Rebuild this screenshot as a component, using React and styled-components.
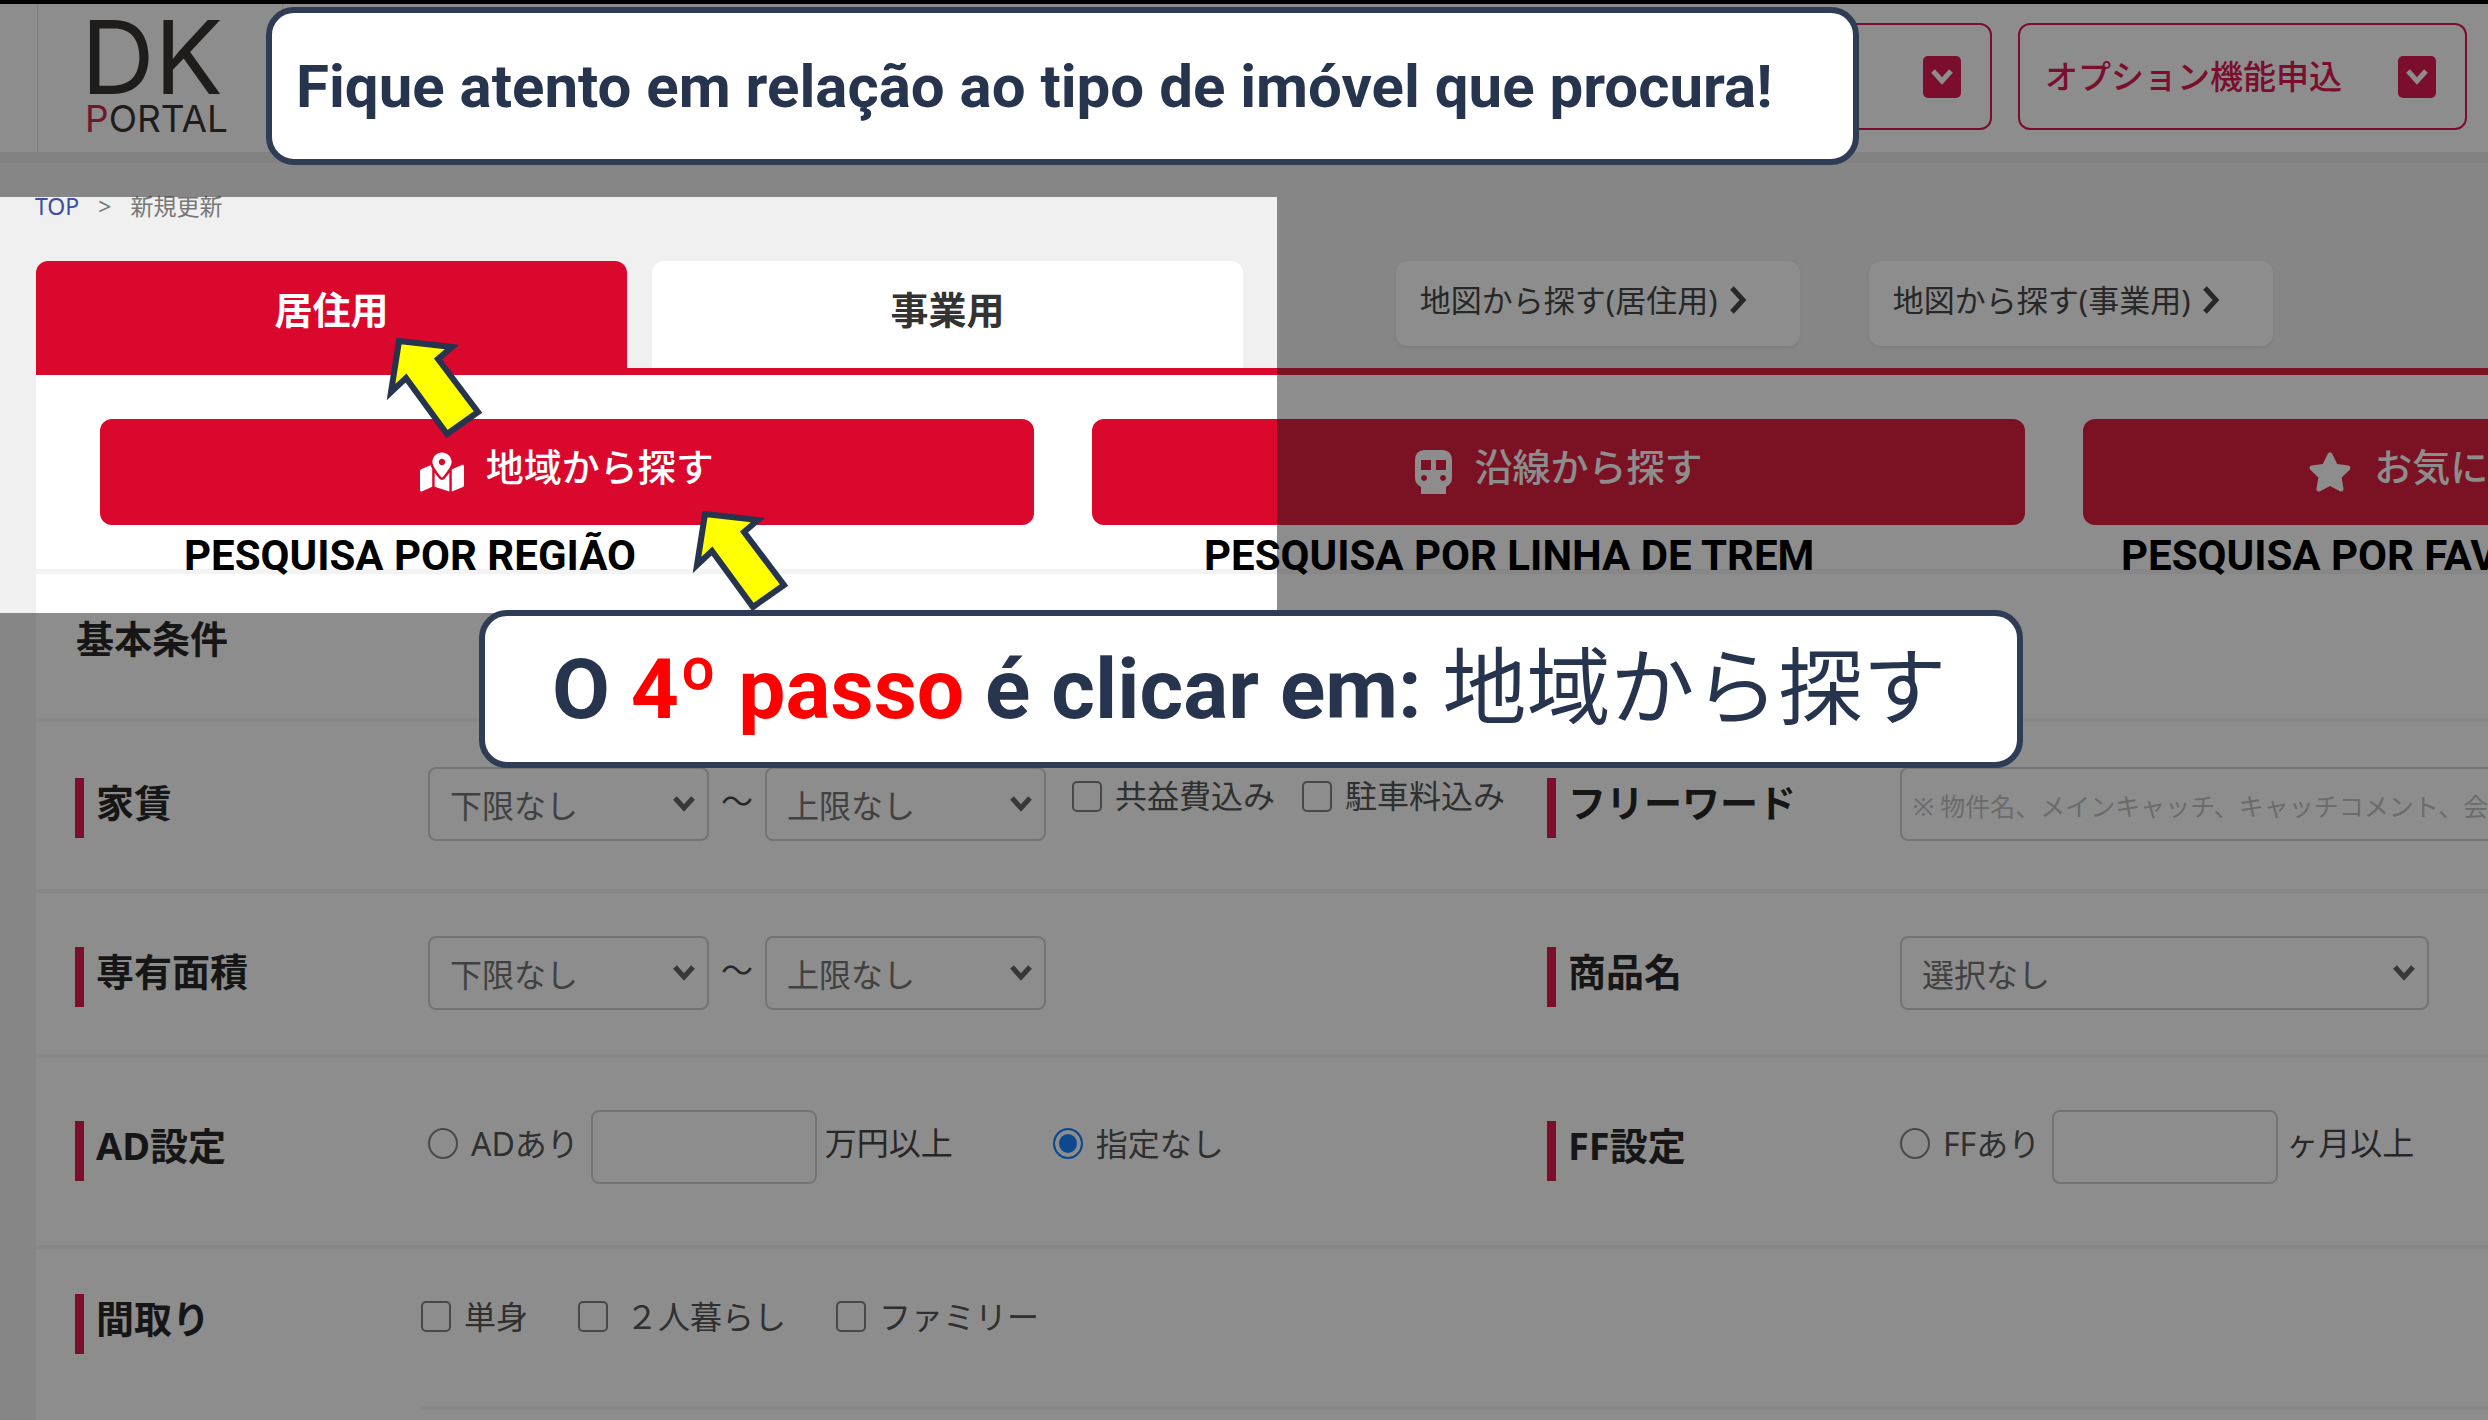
import styled, { createGlobalStyle } from 'styled-components'
import { FaMapMarkedAlt, FaStar } from 'react-icons/fa'

const GlobalStyle = createGlobalStyle`
    *, *::before, *::after {
        box-sizing: border-box;
    }
    body {
        margin: 0;
        background: #f0f0f0;
        color: #333;
        font-family: "Noto Sans", "Noto Sans CJK JP", sans-serif;
        font-size: 32px;
        line-height: 48px;
    }
    button, input, select {
        font: inherit;
        color: inherit;
        margin: 0;
    }
`
const Page = styled.div`
    position: relative;
    display: flex;
    flex-direction: column;
    min-height: 100vh;
    overflow: hidden;
    border-top: 4px solid #000;
`
const Header = styled.header`
    display: flex;
    justify-content: space-between;
    height: 159px;
    padding: 0 21px 0 37px;
    background: #fff;
    border-bottom: 11px solid #e8e8e8;
`
const Logo = styled.a`
    display: block;
    width: 246px;
    padding-left: 43px;
    border: solid #e0e0e0;
    border-width: 0 1px;
    svg {
        display: block;
    }
`
const HeaderNav = styled.nav`
    display: flex;
    gap: 26px;
    padding-top: 19px;
`
const NavButton = styled.button`
    display: flex;
    align-items: center;
    justify-content: flex-end;
    gap: 56px;
    width: 449px;
    height: 107px;
    padding: 0 29px 0 24px;
    font-size: 33px;
    font-weight: 500;
    white-space: nowrap;
    color: #da003c;
    background: #fff;
    border: 2px solid #da003c;
    border-radius: 12px;
`
const Badge = styled.span`
    display: flex;
    align-items: center;
    justify-content: center;
    width: 38px;
    height: 42px;
    background: #da003c;
    border-radius: 5px;
`
const Breadcrumb = styled.nav`
    display: flex;
    gap: 19px;
    padding: 27px 35px 39px;
    font-size: 23px;
    line-height: 32px;
    color: #777;
    a {
        color: #3a4da0;
        text-decoration: none;
    }
`
const Tabs = styled.div`
    display: flex;
    align-items: flex-start;
    margin-left: 36px;
    border-bottom: 7px solid #d9082c;
`
const Tab = styled.button`
    flex: 0 0 24.1%;
    height: 107px;
    margin-right: 25px;
    padding: 0 0 12px;
    font-size: 38px;
    font-weight: 700;
    border: 0;
    border-radius: 12px 12px 0 0;
    color: ${({ $active }) => ($active ? '#fff' : '#333')};
    background: ${({ $active }) => ($active ? '#d9082c' : '#fff')};
`
const MapLinks = styled.div`
    display: flex;
    gap: 69px;
    margin-left: 128px;
`
const MapLink = styled.a`
    display: flex;
    align-items: center;
    gap: 12px;
    width: 404px;
    height: 85px;
    padding: 0 0 8px 24px;
    font-size: 31px;
    white-space: nowrap;
    color: #333;
    text-decoration: none;
    background: #fff;
    border-radius: 12px;
    box-shadow: 0 2px 4px #00000012;
`
const Panel = styled.main`
    flex: 1;
    margin-left: 36px;
    background: #fff;
`
const SearchButtons = styled.div`
    display: grid;
    grid-auto-flow: column;
    grid-auto-columns: 39.1%;
    gap: 58px;
    padding: 44px 0 44px 64px;
    border-bottom: 5px solid #f3f3f3;
`
const SearchButton = styled.button`
    display: flex;
    align-items: center;
    justify-content: center;
    gap: 22px;
    height: 106px;
    padding: 0 0 12px;
    font-size: 38px;
    font-weight: 500;
    white-space: nowrap;
    color: #fff;
    background: #d9082c;
    border: 0;
    border-radius: 12px;
    svg {
        height: 44px;
        width: auto;
        margin-top: 12px;
    }
`
const SectionTitle = styled.h2`
    margin: 0;
    padding: 40px 40px 56px;
    font-size: 38px;
    font-weight: 700;
    color: #111;
    border-bottom: 4px solid #f3f3f3;
`
const Row = styled.div`
    display: flex;
    padding: ${({ $top }) => $top}px 0 ${({ $bottom }) => $bottom}px 39px;
    border-bottom: ${({ $last }) => ($last ? '0' : '4px')} solid #f3f3f3;
`
const Cell = styled.div`
    display: flex;
    flex: ${({ $half }) => ($half ? '0 0 61%' : '1')};
    min-width: 0;
`
const Label = styled.h3`
    flex: 0 0 ${({ $narrow }) => ($narrow ? 346 : 353)}px;
    display: flex;
    height: 60px;
    margin: 11px 0 0;
    font-size: 38px;
    font-weight: 700;
    color: #111;
    &::before {
        content: '';
        width: 9px;
        margin-right: 12px;
        background: #da003c;
    }
`
const Field = styled.div`
    display: flex;
    align-items: ${({ $align }) => $align || 'center'};
    height: 74px;
    white-space: nowrap;
`
const SelectBox = styled.span`
    position: relative;
    display: block;
    width: ${({ $wide }) => ($wide ? 529 : 281)}px;
    svg {
        position: absolute;
        top: 28px;
        right: 13px;
        pointer-events: none;
    }
`
const Select = styled.select`
    display: block;
    width: 100%;
    height: 74px;
    padding: 3px 20px 0;
    color: #666;
    background: #fff;
    border: 2px solid #ccc;
    border-radius: 8px;
    appearance: none;
`
const Tilde = styled.span`
    width: 56px;
    padding-top: 10px;
    text-align: center;
`
const TextInput = styled.input`
    width: ${({ $full }) => ($full ? '640px' : '226px')};
    height: 74px;
    padding: 4px 11px 0;
    font-size: 25px;
    background: #fff;
    border: 2px solid #ccc;
    border-radius: 8px;
    &::placeholder {
        color: #bbb;
        opacity: 1;
    }
`
const Choice = styled.label`
    display: flex;
    align-items: center;
    gap: ${({ $gap }) => $gap || 13}px;
    margin-right: ${({ $space }) => $space || 0}px;
    padding-bottom: 7px;
    color: #444;
`
const Check = styled.input`
    width: 30px;
    height: 31px;
    background: #fff;
    border: 2px solid #767676;
    border-radius: 5px;
    appearance: none;
`
const Radio = styled(Check)`
    border-radius: 50%;
    &:checked {
        border-color: #0075ff;
        background: #0075ff;
        box-shadow: inset 0 0 0 4px #fff;
    }
`
const RentOptions = styled.div`
    display: flex;
    padding: 5px 0 0 26px;
`
const Unit = styled.span`
    margin: 0 ${({ $space }) => $space || 0}px 0 8px;
    padding-bottom: 8px;
`
const Divider = styled.hr`
    height: 4px;
    margin: 49px 0 0 385px;
    border: 0;
    background: #f3f3f3;
`
// everything outside this box is dimmed
const Spotlight = styled.div`
    position: absolute;
    top: 193px;
    left: 0;
    width: 1277px;
    height: 416px;
    box-shadow: 0 0 0 3000px rgba(28, 28, 28, .5);
    pointer-events: none;
`
const Callout = styled.div`
    position: absolute;
    top: ${({ $top }) => $top}px;
    left: ${({ $left }) => $left}px;
    display: flex;
    align-items: center;
    width: ${({ $width }) => $width}px;
    height: 158px;
    padding: 2px 0 0 ${({ $pad }) => $pad}px;
    font-family: Roboto, "Noto Sans CJK JP", sans-serif;
    font-size: ${({ $size }) => $size}px;
    font-weight: 700;
    line-height: 96px;
    white-space: pre;
    color: #26344d;
    background: #fff;
    border: 6px solid #2e3c55;
    border-radius: 28px;
`
const Step = styled.span`
    color: #f00;
`
const Term = styled.span`
    font-weight: 400;
`
const Caption = styled.p`
    position: absolute;
    top: 528px;
    left: ${({ $left }) => $left}px;
    margin: 0;
    font-family: Roboto, sans-serif;
    font-size: 42px;
    font-weight: 700;
    white-space: nowrap;
    color: #000;
`
const ArrowIcon = styled.svg`
    position: absolute;
    top: ${({ $top }) => $top}px;
    left: ${({ $left }) => $left}px;
`

const Arrow = ({ top, left }) => (
    <ArrowIcon $top={top} $left={left} width="102" height="110" viewBox="0 0 102 110">
        <path d="M14 7 L67 13 L53 25 L93 78 L62 100 L21 44 L6 58 Z" fill="#ff0" stroke="#26344d" strokeWidth="6" />
    </ArrowIcon>
)

const Chevron = ({ color = '#555' }) => (
    <svg width="24" height="18" viewBox="0 0 24 18">
        <path d="M3 3 L12 13 L21 3" fill="none" stroke={color} strokeWidth="5" />
    </svg>
)

const TrainIcon = () => (
    <svg width="38" height="44" viewBox="0 0 38 44" fill="currentColor">
        <path
            fillRule="evenodd"
            d="M9 0 H28 Q37 1 37 10 V28 Q37 34 31 37 V44 H6 V37 Q0 34 0 28 V10 Q0 1 9 0 Z M6 10 V20 H16 V10 Z M21 10 V20 H31 V10 Z M9 25 a3 3 0 1 0 .1 0 Z M28 25 a3 3 0 1 0 .1 0 Z"
        />
    </svg>
)

const Dropdown = ({ label, option, wide }) => (
    <SelectBox $wide={wide}>
        <Select aria-label={label}>
            <option>{option}</option>
        </Select>
        <Chevron />
    </SelectBox>
)

const Range = ({ name }) => (
    <>
        <Dropdown label={`${name} 下限`} option="下限なし" />
        <Tilde>～</Tilde>
        <Dropdown label={`${name} 上限`} option="上限なし" />
    </>
)

const searches = [
    { icon: <FaMapMarkedAlt />, text: '地域から探す' },
    { icon: <TrainIcon />, text: '沿線から探す' },
    { icon: <FaStar />, text: 'お気に入り条件から探す' },
]

const captions = [
    { left: 184, text: 'PESQUISA POR REGIÃO' },
    { left: 1204, text: 'PESQUISA POR LINHA DE TREM' },
    { left: 2121, text: 'PESQUISA POR FAVORITOS' },
]

const App = () => {
    return (
        <Page>
            <GlobalStyle />
            <Header>
                <Logo href="#" aria-label="DK PORTAL">
                    <svg width="165" height="148" viewBox="0 0 165 148" fill="#221c1c">
                        <text x="0" y="90" fontFamily="Inter" fontSize="102">DK</text>
                        <text x="4" y="128" fontFamily="Inter" fontSize="37"><tspan fill="#c8103c">P</tspan>ORTAL</text>
                    </svg>
                </Logo>
                <HeaderNav>
                    <NavButton aria-label="メニュー"><Badge><Chevron color="#fff" /></Badge></NavButton>
                    <NavButton>オプション機能申込<Badge><Chevron color="#fff" /></Badge></NavButton>
                </HeaderNav>
            </Header>
            <Breadcrumb>
                <a href="#">TOP</a>
                <span>&gt;</span>
                <span>新規更新</span>
            </Breadcrumb>
            <Tabs>
                <Tab $active>居住用</Tab>
                <Tab>事業用</Tab>
                <MapLinks>
                    {['居住用', '事業用'].map((kind) => (
                        <MapLink href="#" key={kind}>
                            地図から探す({kind})
                            <svg width="18" height="28" viewBox="0 0 18 28">
                                <path d="M3 2 L14 14 L3 26" fill="none" stroke="#333" strokeWidth="5" />
                            </svg>
                        </MapLink>
                    ))}
                </MapLinks>
            </Tabs>
            <Panel>
                <SearchButtons>
                    {searches.map((search) => (
                        <SearchButton key={search.text}>{search.icon}{search.text}</SearchButton>
                    ))}
                </SearchButtons>
                <SectionTitle>基本条件</SectionTitle>
                <Row $top={45} $bottom={48}>
                    <Cell $half>
                        <Label>家賃</Label>
                        <Field $align="flex-start">
                            <Range name="家賃" />
                            <RentOptions>
                                <Choice $space={27}><Check type="checkbox" />共益費込み</Choice>
                                <Choice><Check type="checkbox" />駐車料込み</Choice>
                            </RentOptions>
                        </Field>
                    </Cell>
                    <Cell>
                        <Label>フリーワード</Label>
                        <Field>
                            <TextInput $full aria-label="フリーワード" placeholder="※ 物件名、メインキャッチ、キャッチコメント、会社名" />
                        </Field>
                    </Cell>
                </Row>
                <Row $top={43} $bottom={44}>
                    <Cell $half>
                        <Label>専有面積</Label>
                        <Field $align="flex-start"><Range name="専有面積" /></Field>
                    </Cell>
                    <Cell>
                        <Label>商品名</Label>
                        <Field $align="flex-start"><Dropdown wide label="商品名" option="選択なし" /></Field>
                    </Cell>
                </Row>
                <Row $top={52} $bottom={61}>
                    <Cell $half>
                        <Label>AD設定</Label>
                        <Field>
                            <Choice $space={12}><Radio type="radio" name="ad" />ADあり</Choice>
                            <TextInput aria-label="AD 万円以上" />
                            <Unit $space={100}>万円以上</Unit>
                            <Choice><Radio type="radio" name="ad" defaultChecked />指定なし</Choice>
                        </Field>
                    </Cell>
                    <Cell>
                        <Label>FF設定</Label>
                        <Field>
                            <Choice $space={12}><Radio type="radio" name="ff" />FFあり</Choice>
                            <TextInput aria-label="FF ヶ月以上" />
                            <Unit>ヶ月以上</Unit>
                        </Field>
                    </Cell>
                </Row>
                <Row $top={34} $bottom={0} $last>
                    <Label $narrow>間取り</Label>
                    <Field>
                        <Choice $space={50}><Check type="checkbox" />単身</Choice>
                        <Choice $gap={18} $space={50}><Check type="checkbox" />２人暮らし</Choice>
                        <Choice><Check type="checkbox" />ファミリー</Choice>
                    </Field>
                </Row>
                <Divider />
            </Panel>

            <Spotlight />
            {captions.map((caption) => (
                <Caption key={caption.text} $left={caption.left}>{caption.text}</Caption>
            ))}
            <Callout $top={3} $left={266} $width={1593} $size={60} $pad={24}>Fique atento em relação ao tipo de imóvel que procura!</Callout>
            <Callout $top={606} $left={479} $width={1544} $size={84} $pad={67}>
                O <Step>4º passo</Step> é clicar em: <Term>地域から探す</Term>
            </Callout>
            <Arrow top={330} left={385} />
            <Arrow top={503} left={691} />
        </Page>
    )
}
export default App
